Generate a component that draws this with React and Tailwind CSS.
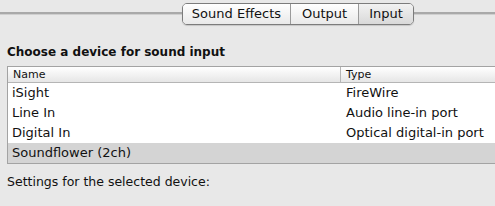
const rows = [
  { name: 'iSight', type: 'FireWire' },
  { name: 'Line In', type: 'Audio line-in port' },
  { name: 'Digital In', type: 'Optical digital-in port' },
  { name: 'Soundflower (2ch)', type: '', selected: true },
]

export default function App() {
  return (
    <div className="w-[495px] h-[206px] overflow-hidden bg-[#e8e8e8] text-[#111] font-['DejaVu_Sans',sans-serif]">
      {/* tab strip with line behind it */}
      <div className="relative h-[29px] pt-[3px]">
        <div className="absolute left-0 right-0 top-[12px] h-[2px] bg-[#a9a9a9]" />
        <div className="absolute left-0 right-0 top-[14px] h-px bg-[#cfcfcf]" />
        <div className="relative ml-[182px] flex w-[232px] h-[22px] rounded-[5px] border border-[#7c7c7c] overflow-hidden text-[13px] leading-[20px] shadow-[0_1px_1px_rgba(0,0,0,0.15)]">
          <div className="w-[108px] text-center bg-gradient-to-b from-white to-[#e9e9e9] border-r border-[#9a9a9a]">Sound Effects</div>
          <div className="w-[68px] text-center bg-gradient-to-b from-white to-[#e9e9e9] border-r border-[#9a9a9a]">Output</div>
          <div className="flex-1 text-center bg-gradient-to-b from-[#f2f2f2] to-[#d9d9d9]">Input</div>
        </div>
      </div>

      <div className="pl-[7px] pt-[13px]">
        <h2 className="text-[12px] font-bold leading-[20px]">Choose a device for sound input</h2>
        <div className="mt-[4px] border-l border-t border-b border-[#a3a3a3] bg-white">
          <div className="flex h-[16px] text-[11px] leading-[15px] bg-gradient-to-b from-white to-[#e6e6e6] border-b border-[#b5b5b5]">
            <div className="w-[333px] pl-[5px] border-r border-[#b5b5b5]">Name</div>
            <div className="pl-[5px]">Type</div>
          </div>
          {rows.map(r => (
            <div key={r.name} className={`flex h-[20px] text-[13px] leading-[20px] ${r.selected ? 'bg-[#d4d4d4]' : ''}`}>
              <div className="w-[334px] pl-[4px]">{r.name}</div>
              <div className="pl-[4px]">{r.type}</div>
            </div>
          ))}
        </div>
        <p className="mt-[9px] text-[12.5px] leading-[18px]">Settings for the selected device:</p>
      </div>
    </div>
  )
}
